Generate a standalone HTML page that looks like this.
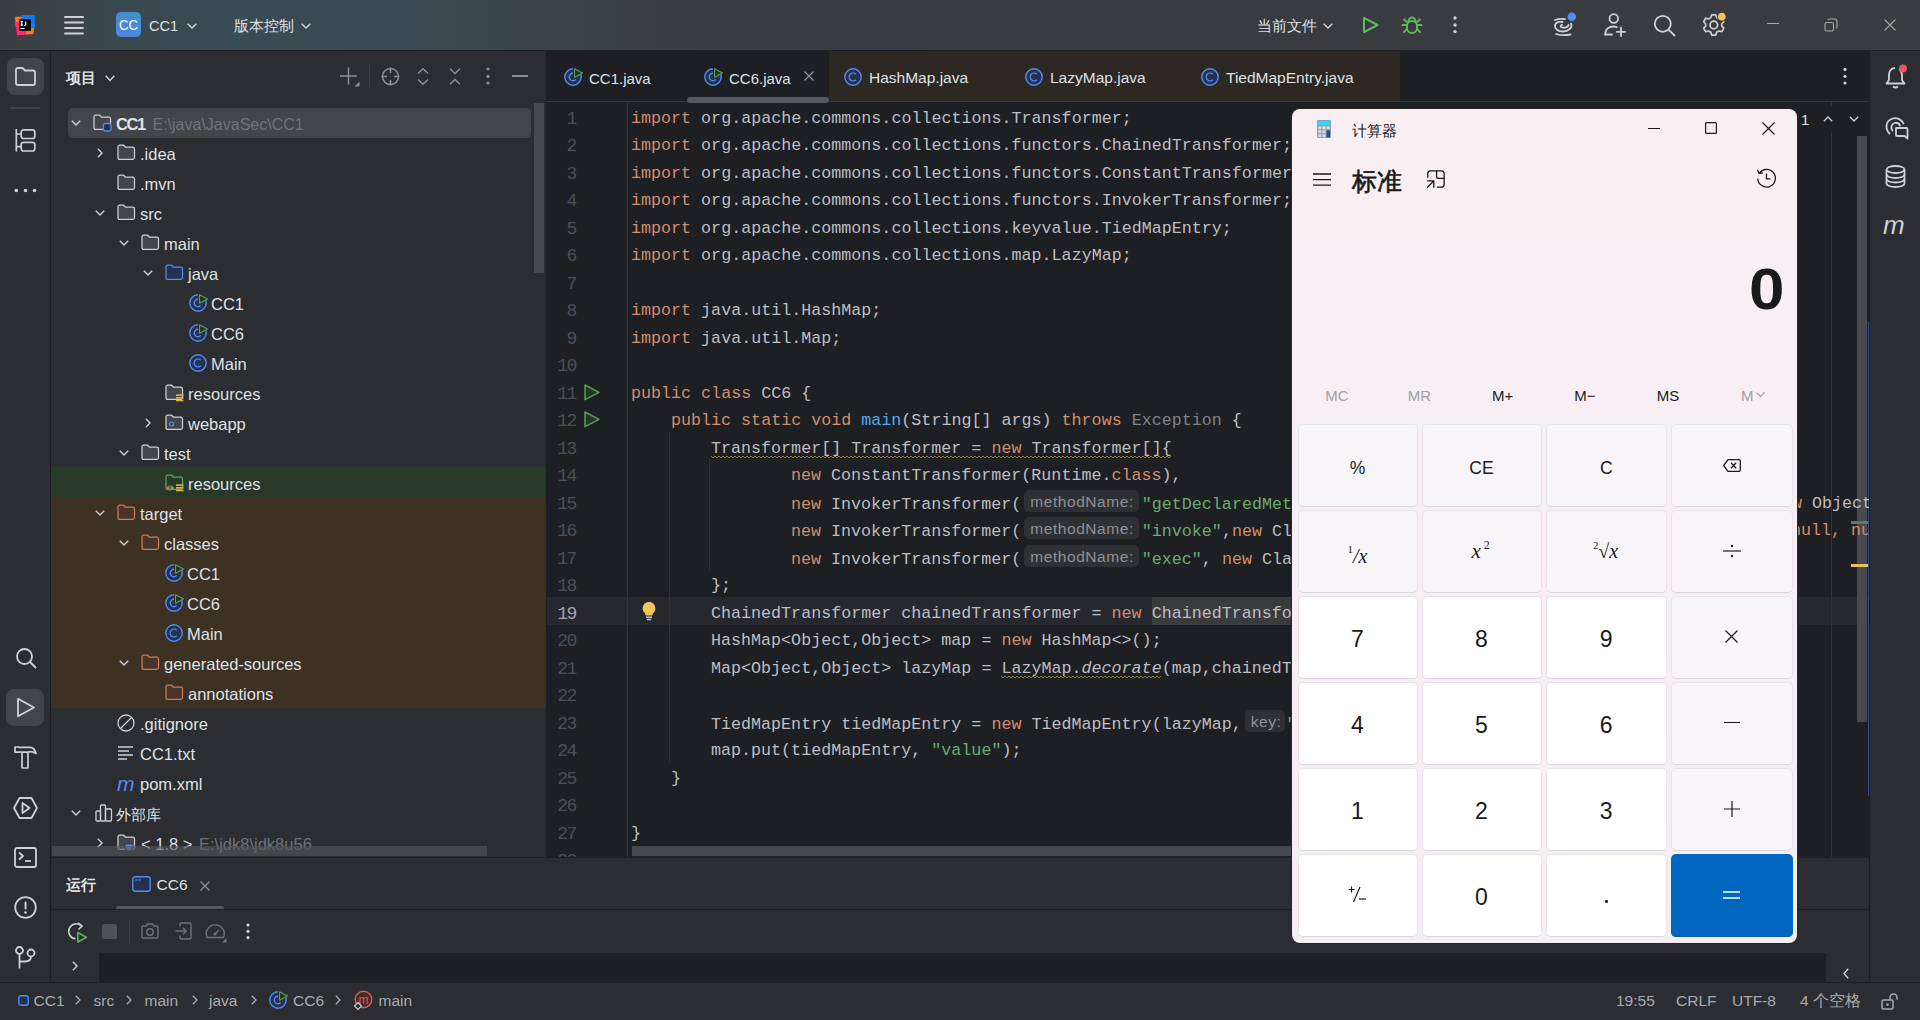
<!DOCTYPE html>
<html><head><meta charset="utf-8">
<style>
*{margin:0;padding:0;box-sizing:border-box}
html,body{width:1920px;height:1020px;overflow:hidden;background:#2B2D30;font-family:"Liberation Sans",sans-serif;color:#DFE1E5}
.a{position:absolute}
.t{position:absolute;white-space:pre}
svg{position:absolute;overflow:visible}
.code{position:absolute;white-space:pre;font-family:"Liberation Mono",monospace;font-size:16.71px;line-height:16.6px;color:#BCBEC4}
.k{color:#CF8E6D}.s{color:#6AAB73}.f{color:#56A8F5}.g{color:#7E8289}
.h{font-family:"Liberation Sans",sans-serif;font-size:15.5px;letter-spacing:0.55px;color:#8E9196;background:#2E3034;border-radius:5px;padding:2.5px 5px 2.2px 6px;margin:0 3px 0 3px;position:relative;top:-2.2px}
</style></head><body>

<div class="a" style="left:0px;top:0px;width:1920px;height:50px;background:linear-gradient(90deg,#3b3e41 0px,#3a464d 90px,#394b54 230px,#3a4951 420px,#393e42 720px,#393b3f 1000px,#393b3f 1920px);"></div>
<div class="a" style="left:0px;top:50px;width:1920px;height:1px;background:#1E1F22;"></div>
<div class="a" style="left:0px;top:51px;width:50px;height:932px;background:#2B2D30;"></div>
<div class="a" style="left:50px;top:51px;width:1px;height:932px;background:#1E1F22;"></div>
<div class="a" style="left:51px;top:51px;width:495px;height:806px;background:#2B2D30;"></div>
<div class="a" style="left:546px;top:51px;width:1323px;height:806px;background:#1E1F22;"></div>
<div class="a" style="left:1869px;top:51px;width:1px;height:932px;background:#1E1F22;"></div>
<div class="a" style="left:1870px;top:51px;width:50px;height:932px;background:#2B2D30;"></div>
<div class="a" style="left:51px;top:857px;width:1818px;height:1px;background:#1E1F22;"></div>
<div class="a" style="left:51px;top:858px;width:1818px;height:124px;background:#2B2D30;"></div>
<div class="a" style="left:0px;top:982px;width:1920px;height:1px;background:#1E1F22;"></div>
<div class="a" style="left:0px;top:983px;width:1920px;height:37px;background:#2B2D30;"></div>
<svg style="left:15px;top:15px" width="20" height="20" viewBox="0 0 20 20">
<rect x="6.3" y="0" width="13.5" height="13" rx="0.8" fill="#087CFA"/>
<path d="M0 1.8 H6.5 V12 H0.6 Z" fill="#FE7B17"/>
<path d="M0.6 7 H7 L13.5 19.5 L2 20.3 Z" fill="#FF2D6A"/>
<path d="M11 13 H19 L18.5 19 L11.5 19.5 Z" fill="#FE7B17"/>
<rect x="4.2" y="4.2" width="11.8" height="11.7" fill="#000"/>
<path d="M5.5 6.5 H8 M6.75 6.5 V10.2 M5.5 10.2 H8 M10.7 6.5 V9.5 Q10.7 10.5 9.3 10.3" fill="none" stroke="#fff" stroke-width="1.2"/>
<rect x="5.3" y="13" width="4.4" height="1" fill="#fff"/>
</svg>
<svg style="left:64px;top:16px" width="20" height="18" viewBox="0 0 20 18"><rect x="0" y="0" width="20" height="2" rx="1" fill="#CED0D6"/><rect x="0" y="5.5" width="20" height="2" rx="1" fill="#CED0D6"/><rect x="0" y="11" width="20" height="2" rx="1" fill="#CED0D6"/><rect x="0" y="16.5" width="20" height="2" rx="1" fill="#CED0D6"/></svg>
<svg style="left:116px;top:12px" width="25" height="25" viewBox="0 0 25 25">
<defs><linearGradient id="ccg" x1="0" y1="1" x2="1" y2="0"><stop offset="0" stop-color="#5A82E6"/><stop offset="1" stop-color="#3B93C8"/></linearGradient></defs>
<rect width="25" height="25" rx="5" fill="url(#ccg)"/>
<text x="12.5" y="18" text-anchor="middle" font-family="Liberation Sans" font-size="14" fill="#fff" textLength="19" lengthAdjust="spacingAndGlyphs">CC</text>
</svg>
<div class="t " style="left:149px;top:19.03px;font-size:14.5px;line-height:14.5px;color:#DFE1E5;font-weight:normal;font-family:'Liberation Sans',sans-serif;">CC1</div>
<svg style="left:186.5px;top:22.5px" width="10" height="5.5" viewBox="0 0 10 5.5"><path d="M0.7 0.7 L5.0 5.0 L9.3 0.7" fill="none" stroke="#CED0D6" stroke-width="1.5"/></svg>
<div class="t " style="left:234px;top:17.80px;font-size:15px;line-height:15px;color:#DFE1E5;font-weight:normal;font-family:'Liberation Sans',sans-serif;">版本控制</div>
<svg style="left:301px;top:22.5px" width="10" height="5.5" viewBox="0 0 10 5.5"><path d="M0.7 0.7 L5.0 5.0 L9.3 0.7" fill="none" stroke="#CED0D6" stroke-width="1.5"/></svg>
<div class="t " style="left:1257px;top:17.80px;font-size:15px;line-height:15px;color:#DFE1E5;font-weight:normal;font-family:'Liberation Sans',sans-serif;">当前文件</div>
<svg style="left:1323px;top:23px" width="10" height="5.5" viewBox="0 0 10 5.5"><path d="M0.7 0.7 L5.0 5.0 L9.3 0.7" fill="none" stroke="#CED0D6" stroke-width="1.5"/></svg>
<svg style="left:1362px;top:16px" width="17" height="18" viewBox="0 0 17 18"><path d="M2 1.8 L15.5 9 L2 16.2 Z" fill="none" stroke="#5FB865" stroke-width="2" stroke-linejoin="round"/></svg>
<svg style="left:1401px;top:15px" width="22" height="20" viewBox="0 0 22 20"><g fill="none" stroke="#5FB865" stroke-width="1.8" stroke-linecap="round">
<path d="M7.5 6 A3.5 3.5 0 0 1 14.5 6"/>
<rect x="6" y="6" width="10" height="12" rx="5"/>
<path d="M6 10 H1.5 M16 10 H20.5 M6 7 L3 4.5 M16 7 L19 4.5 M6 14 L3 17 M16 14 L19 17"/>
</g></svg>
<svg style="left:1453px;top:16px" width="4" height="18" viewBox="0 0 4 18"><circle cx="2" cy="2" r="1.7" fill="#CED0D6"/><circle cx="2" cy="9" r="1.7" fill="#CED0D6"/><circle cx="2" cy="15.6" r="1.7" fill="#CED0D6"/></svg>
<svg style="left:1553px;top:14px" width="24" height="22" viewBox="0 0 24 22"><g fill="none" stroke="#CED0D6" stroke-width="1.8" stroke-linecap="round">
<path d="M2 6 C6 4.5 9 4.5 12 5.2"/>
<path d="M18 9.5 C20 14 15 17.5 10 17.5 C5 17.5 1.5 15 2 11.5 C2.5 8.5 6 7.5 9.5 8"/>
<path d="M15.5 11 C15 13.5 11.5 14.2 9 13.5 C7 13 7 11 9 10.8"/>
<path d="M3 20 C8 21.5 13 21.5 17.5 20.5"/>
</g><circle cx="18.8" cy="2.7" r="4.3" fill="#548AF7"/></svg>
<svg style="left:1603px;top:13px" width="25" height="24" viewBox="0 0 25 24"><g fill="none" stroke="#CED0D6" stroke-width="1.8" stroke-linecap="round">
<circle cx="10.8" cy="5.5" r="4.3"/>
<path d="M2.2 21.5 C2.2 16 6 13.5 10.5 13.5 C12 13.5 13 13.7 14 14.2"/>
<path d="M2.2 21.5 H9"/>
<path d="M18 14.5 V23 M13.8 18.8 H22.2"/>
</g></svg>
<svg style="left:1653px;top:14px" width="23" height="23" viewBox="0 0 23 23"><g fill="none" stroke="#CED0D6" stroke-width="1.8" stroke-linecap="round"><circle cx="9.8" cy="9.8" r="8"/><path d="M15.8 15.8 L21.5 21.5"/></g></svg>
<svg style="left:1702px;top:13px" width="24" height="24" viewBox="0 0 24 24"><g fill="none" stroke="#CED0D6" stroke-width="1.8" stroke-linejoin="round">
<path d="M9.5 2 L14 2 L14.8 5 L17.5 6.5 L20.5 5.6 L22.7 9.5 L20.5 11.7 L20.5 14.3 L22.7 16.5 L20.5 20.4 L17.5 19.5 L14.8 21 L14 24 L9.5 24 L8.7 21 L6 19.5 L3 20.4 L0.8 16.5 L3 14.3 L3 11.7 L0.8 9.5 L3 5.6 L6 6.5 L8.7 5 Z" transform="scale(0.92) translate(1,0)"/>
<circle cx="11.8" cy="12" r="3.8"/>
</g><circle cx="19.8" cy="3.7" r="4.4" fill="#F2C55C" stroke="#393b3f" stroke-width="1"/></svg>
<div class="a" style="left:1767px;top:23px;width:12px;height:1.2px;background:#A8A8A8;"></div>
<svg style="left:1824px;top:18px" width="14" height="14" viewBox="0 0 14 14"><g fill="none" stroke="#A8A8A8" stroke-width="1.1"><rect x="1" y="4.5" width="8.5" height="8.5" rx="1.8"/><path d="M4 2 L4 2 Q4 1 5.5 1 L10.5 1 Q13 1 13 3.5 L13 9 Q13 10 12 10.2"/></g></svg>
<svg style="left:1884px;top:19px" width="12" height="12" viewBox="0 0 12 12"><path d="M0.5 0.5 L11.5 11.5 M11.5 0.5 L0.5 11.5" stroke="#A8A8A8" stroke-width="1.1"/></svg>
<div class="a" style="left:7px;top:58px;width:37px;height:37px;background:#43454A;border-radius:8px"></div>
<svg style="left:15px;top:67px" width="21" height="19" viewBox="0 0 21 19"><path d="M1 3 Q1 1 3 1 H7.5 L10 3.5 H18 Q20 3.5 20 5.5 V16 Q20 18 18 18 H3 Q1 18 1 16 Z" fill="none" stroke="#CED0D6" stroke-width="1.8" stroke-linejoin="round"/></svg>
<div class="a" style="left:10px;top:107px;width:30px;height:2px;background:#43454A;border-radius:1px"></div>
<svg style="left:15px;top:129px" width="21" height="23" viewBox="0 0 21 23"><g fill="none" stroke="#CED0D6" stroke-width="1.7"><path d="M1.3 0 V22.5"/><rect x="6.2" y="0.9" width="13.6" height="8.6" rx="2.3"/><rect x="6.2" y="13.4" width="13.6" height="8.6" rx="2.3"/><path d="M1.3 5 H6.2 M1.3 17.6 H6.2"/></g></svg>
<svg style="left:14px;top:188px" width="24" height="5" viewBox="0 0 24 5"><circle cx="2.3" cy="2.5" r="1.8" fill="#CED0D6"/><circle cx="11.5" cy="2.5" r="1.8" fill="#CED0D6"/><circle cx="20.5" cy="2.5" r="1.8" fill="#CED0D6"/></svg>
<svg style="left:15px;top:647px" width="22" height="22" viewBox="0 0 22 22"><g fill="none" stroke="#CED0D6" stroke-width="1.8" stroke-linecap="round"><circle cx="9.5" cy="9.5" r="7.5"/><path d="M15 15 L20.5 20.5"/></g></svg>
<div class="a" style="left:6px;top:689px;width:38px;height:37px;background:#43454A;border-radius:8px"></div>
<svg style="left:16px;top:697px" width="20" height="21" viewBox="0 0 20 21"><path d="M2 1.8 L18 10.5 L2 19.2 Z" fill="none" stroke="#CED0D6" stroke-width="1.8" stroke-linejoin="round"/></svg>
<svg style="left:14px;top:746px" width="24" height="24" viewBox="0 0 24 24"><g fill="none" stroke="#CED0D6" stroke-width="1.7" stroke-linejoin="round"><path d="M1 1 H4.5 Q6 1.8 7.5 1.3 H16 Q20.5 1.3 22 7.5 Q19 5.3 15 5.8 L14 6.2 H7.5 Q6 5.6 4.5 6.2 H1 Z"/><path d="M8 6.2 V21.5 Q8 22 8.5 22 H13.5 Q14 22 14 21.5 V6.2"/></g></svg>
<svg style="left:13px;top:797px" width="25" height="22" viewBox="0 0 25 22"><g fill="none" stroke="#CED0D6" stroke-width="1.8" stroke-linejoin="round"><path d="M6.5 1 H18.5 L24 11 L18.5 21 H6.5 L1 11 Z"/><path d="M9.5 6 L16.5 11 L9.5 16 Z"/></g></svg>
<svg style="left:14px;top:847px" width="23" height="21" viewBox="0 0 23 21"><g fill="none" stroke="#CED0D6" stroke-width="1.8" stroke-linejoin="round"><rect x="1" y="1" width="21" height="19" rx="2"/><path d="M5 5.5 L9 9 L5 12.5"/><path d="M11 14 H17"/></g></svg>
<svg style="left:14px;top:896px" width="23" height="23" viewBox="0 0 23 23"><g fill="none" stroke="#CED0D6" stroke-width="1.8"><circle cx="11.5" cy="11.5" r="10.3"/></g><rect x="10.6" y="5.5" width="1.9" height="8" rx="0.9" fill="#CED0D6"/><circle cx="11.5" cy="16.5" r="1.3" fill="#CED0D6"/></svg>
<svg style="left:15px;top:946px" width="21" height="23" viewBox="0 0 21 23"><g fill="none" stroke="#CED0D6" stroke-width="1.8"><circle cx="4.5" cy="4.5" r="3.5"/><circle cx="16" cy="7" r="3.5"/><path d="M4.5 8 V22.5"/><path d="M16 10.5 Q16 15.5 10 15.5 H4.5"/></g></svg>
<div class="t " style="left:66px;top:69.80px;font-size:15px;line-height:15px;color:#DFE1E5;font-weight:bold;font-family:'Liberation Sans',sans-serif;">项目</div>
<svg style="left:105px;top:74.5px" width="10" height="6" viewBox="0 0 10 6"><path d="M0.7 0.7 L5.0 5.5 L9.3 0.7" fill="none" stroke="#CED0D6" stroke-width="1.5"/></svg>
<svg style="left:340px;top:67px" width="20" height="20" viewBox="0 0 20 20"><g stroke="#8C8F94" stroke-width="1.5"><path d="M8.5 0.5 V17.5 M0 9 H17"/></g><path d="M19.5 14.5 V19.5 H14.5 Z" fill="#8C8F94"/></svg>
<div class="a" style="left:369px;top:64px;width:1px;height:24px;background:#393B40;"></div>
<svg style="left:381px;top:67px" width="19" height="19" viewBox="0 0 19 19"><g fill="none" stroke="#8C8F94" stroke-width="1.5"><circle cx="9.5" cy="9.5" r="8"/><path d="M9.5 0.5 V6 M9.5 13 V18.5 M0.5 9.5 H6 M13 9.5 H18.5"/></g></svg>
<svg style="left:417px;top:68px" width="12" height="17" viewBox="0 0 12 17"><g fill="none" stroke="#8C8F94" stroke-width="1.5"><path d="M1 5.5 L6 0.8 L11 5.5"/><path d="M1 11.5 L6 16.2 L11 11.5"/></g></svg>
<svg style="left:449px;top:68px" width="12" height="17" viewBox="0 0 12 17"><g fill="none" stroke="#8C8F94" stroke-width="1.5"><path d="M1 0.8 L6 5.5 L11 0.8"/><path d="M1 16.2 L6 11.5 L11 16.2"/></g></svg>
<svg style="left:486px;top:67px" width="4" height="18" viewBox="0 0 4 18"><circle cx="2" cy="2" r="1.6" fill="#8C8F94"/><circle cx="2" cy="9.3" r="1.6" fill="#8C8F94"/><circle cx="2" cy="16" r="1.6" fill="#8C8F94"/></svg>
<div class="a" style="left:512px;top:75px;width:16px;height:1.6px;background:#8C8F94;"></div>
<div class="a" style="left:68px;top:108px;width:463px;height:30px;background:#43454A;border-radius:5px"></div>
<div class="a" style="left:51px;top:467px;width:495px;height:30px;background:#283829;"></div>
<div class="a" style="left:51px;top:497px;width:495px;height:211px;background:#3D3124;"></div>
<svg style="left:71px;top:120px" width="10" height="6" viewBox="0 0 10 6"><path d="M0.8 0.8 L5 5 L9.2 0.8" fill="none" stroke="#CED0D6" stroke-width="1.4"/></svg>
<svg style="left:93px;top:114px" width="19" height="17" viewBox="0 0 19 17"><path d="M1 3 Q1 1.2 2.8 1.2 H6.6 L8.6 3.2 H15.7 Q17.5 3.2 17.5 5 V13.6 Q17.5 15.4 15.7 15.4 H2.8 Q1 15.4 1 13.6 Z" fill="#43454A" stroke="#CED0D6" stroke-width="1.25" stroke-linejoin="round"/><rect x="10.5" y="9.5" width="7.5" height="7.5" rx="1.8" fill="#25324D" stroke="#548AF7" stroke-width="1.3"/></svg>
<div class="t " style="left:116px;top:116.33px;font-size:16.5px;line-height:16.5px;color:#DFE1E5;font-weight:bold;font-family:'Liberation Sans',sans-serif;letter-spacing:-1.4px">CC1</div>
<div class="t " style="left:152.5px;top:116.76px;font-size:16px;line-height:16px;color:#6F737A;font-weight:normal;font-family:'Liberation Sans',sans-serif;">E:\java\JavaSec\CC1</div>
<svg style="left:97px;top:148px" width="6" height="10" viewBox="0 0 6 10"><path d="M0.8 0.8 L5 5 L0.8 9.2" fill="none" stroke="#CED0D6" stroke-width="1.4"/></svg>
<svg style="left:117px;top:144px" width="19" height="17" viewBox="0 0 19 17"><path d="M1 3 Q1 1.2 2.8 1.2 H6.6 L8.6 3.2 H15.7 Q17.5 3.2 17.5 5 V13.6 Q17.5 15.4 15.7 15.4 H2.8 Q1 15.4 1 13.6 Z" fill="#43454A" stroke="#CED0D6" stroke-width="1.25" stroke-linejoin="round"/></svg>
<div class="t " style="left:140px;top:146.33px;font-size:16.5px;line-height:16.5px;color:#DFE1E5;font-weight:normal;font-family:'Liberation Sans',sans-serif;">.idea</div>
<svg style="left:117px;top:174px" width="19" height="17" viewBox="0 0 19 17"><path d="M1 3 Q1 1.2 2.8 1.2 H6.6 L8.6 3.2 H15.7 Q17.5 3.2 17.5 5 V13.6 Q17.5 15.4 15.7 15.4 H2.8 Q1 15.4 1 13.6 Z" fill="#43454A" stroke="#CED0D6" stroke-width="1.25" stroke-linejoin="round"/></svg>
<div class="t " style="left:140px;top:176.33px;font-size:16.5px;line-height:16.5px;color:#DFE1E5;font-weight:normal;font-family:'Liberation Sans',sans-serif;">.mvn</div>
<svg style="left:95px;top:210px" width="10" height="6" viewBox="0 0 10 6"><path d="M0.8 0.8 L5 5 L9.2 0.8" fill="none" stroke="#CED0D6" stroke-width="1.4"/></svg>
<svg style="left:117px;top:204px" width="19" height="17" viewBox="0 0 19 17"><path d="M1 3 Q1 1.2 2.8 1.2 H6.6 L8.6 3.2 H15.7 Q17.5 3.2 17.5 5 V13.6 Q17.5 15.4 15.7 15.4 H2.8 Q1 15.4 1 13.6 Z" fill="#43454A" stroke="#CED0D6" stroke-width="1.25" stroke-linejoin="round"/></svg>
<div class="t " style="left:140px;top:206.33px;font-size:16.5px;line-height:16.5px;color:#DFE1E5;font-weight:normal;font-family:'Liberation Sans',sans-serif;">src</div>
<svg style="left:119px;top:240px" width="10" height="6" viewBox="0 0 10 6"><path d="M0.8 0.8 L5 5 L9.2 0.8" fill="none" stroke="#CED0D6" stroke-width="1.4"/></svg>
<svg style="left:141px;top:234px" width="19" height="17" viewBox="0 0 19 17"><path d="M1 3 Q1 1.2 2.8 1.2 H6.6 L8.6 3.2 H15.7 Q17.5 3.2 17.5 5 V13.6 Q17.5 15.4 15.7 15.4 H2.8 Q1 15.4 1 13.6 Z" fill="#43454A" stroke="#CED0D6" stroke-width="1.25" stroke-linejoin="round"/></svg>
<div class="t " style="left:164px;top:236.33px;font-size:16.5px;line-height:16.5px;color:#DFE1E5;font-weight:normal;font-family:'Liberation Sans',sans-serif;">main</div>
<svg style="left:143px;top:270px" width="10" height="6" viewBox="0 0 10 6"><path d="M0.8 0.8 L5 5 L9.2 0.8" fill="none" stroke="#CED0D6" stroke-width="1.4"/></svg>
<svg style="left:165px;top:264px" width="19" height="17" viewBox="0 0 19 17"><path d="M1 3 Q1 1.2 2.8 1.2 H6.6 L8.6 3.2 H15.7 Q17.5 3.2 17.5 5 V13.6 Q17.5 15.4 15.7 15.4 H2.8 Q1 15.4 1 13.6 Z" fill="#25324D" stroke="#548AF7" stroke-width="1.25" stroke-linejoin="round"/></svg>
<div class="t " style="left:188px;top:266.33px;font-size:16.5px;line-height:16.5px;color:#DFE1E5;font-weight:normal;font-family:'Liberation Sans',sans-serif;">java</div>
<svg style="left:189px;top:294px" width="18" height="18" viewBox="0 0 18 18"><defs><mask id="m189303"><rect x="-2" y="-2" width="24" height="24" fill="#fff"/><path d="M9 -1.5 L20 4.5 L9 10.5 Z" fill="#000"/></mask></defs>
<g mask="url(#m189303)"><circle cx="9" cy="9" r="8.2" fill="#25324D" stroke="#548AF7" stroke-width="1.4"/><path d="M11.6 6.4 A3.7 3.7 0 1 0 11.6 11.6" fill="none" stroke="#548AF7" stroke-width="1.4"/></g>
<path d="M10.5 0.8 L18.5 5 L10.5 9.2 Z" fill="#223424" stroke="#5A9E5C" stroke-width="1.1" stroke-linejoin="round"/></svg>
<div class="t " style="left:211px;top:296.33px;font-size:16.5px;line-height:16.5px;color:#DFE1E5;font-weight:normal;font-family:'Liberation Sans',sans-serif;">CC1</div>
<svg style="left:189px;top:324px" width="18" height="18" viewBox="0 0 18 18"><defs><mask id="m189333"><rect x="-2" y="-2" width="24" height="24" fill="#fff"/><path d="M9 -1.5 L20 4.5 L9 10.5 Z" fill="#000"/></mask></defs>
<g mask="url(#m189333)"><circle cx="9" cy="9" r="8.2" fill="#25324D" stroke="#548AF7" stroke-width="1.4"/><path d="M11.6 6.4 A3.7 3.7 0 1 0 11.6 11.6" fill="none" stroke="#548AF7" stroke-width="1.4"/></g>
<path d="M10.5 0.8 L18.5 5 L10.5 9.2 Z" fill="#223424" stroke="#5A9E5C" stroke-width="1.1" stroke-linejoin="round"/></svg>
<div class="t " style="left:211px;top:326.33px;font-size:16.5px;line-height:16.5px;color:#DFE1E5;font-weight:normal;font-family:'Liberation Sans',sans-serif;">CC6</div>
<svg style="left:189px;top:354px" width="18" height="18" viewBox="0 0 18 18"><circle cx="9" cy="9" r="8.2" fill="#25324D" stroke="#548AF7" stroke-width="1.4"/><path d="M11.8 6.2 A3.9 3.9 0 1 0 11.8 11.8" fill="none" stroke="#548AF7" stroke-width="1.4"/></svg>
<div class="t " style="left:211px;top:356.33px;font-size:16.5px;line-height:16.5px;color:#DFE1E5;font-weight:normal;font-family:'Liberation Sans',sans-serif;">Main</div>
<svg style="left:165px;top:384px" width="19" height="17" viewBox="0 0 19 17"><path d="M1 3 Q1 1.2 2.8 1.2 H6.6 L8.6 3.2 H15.7 Q17.5 3.2 17.5 5 V13.6 Q17.5 15.4 15.7 15.4 H2.8 Q1 15.4 1 13.6 Z" fill="#43454A" stroke="#CED0D6" stroke-width="1.25" stroke-linejoin="round"/><g fill="#E3B341"><rect x="11" y="10.3" width="7.5" height="1.6"/><rect x="11" y="13" width="7.5" height="1.6"/><rect x="11" y="15.7" width="7.5" height="1.6"/></g></svg>
<div class="t " style="left:188px;top:386.33px;font-size:16.5px;line-height:16.5px;color:#DFE1E5;font-weight:normal;font-family:'Liberation Sans',sans-serif;">resources</div>
<svg style="left:145px;top:418px" width="6" height="10" viewBox="0 0 6 10"><path d="M0.8 0.8 L5 5 L0.8 9.2" fill="none" stroke="#CED0D6" stroke-width="1.4"/></svg>
<svg style="left:165px;top:414px" width="19" height="17" viewBox="0 0 19 17"><path d="M1 3 Q1 1.2 2.8 1.2 H6.6 L8.6 3.2 H15.7 Q17.5 3.2 17.5 5 V13.6 Q17.5 15.4 15.7 15.4 H2.8 Q1 15.4 1 13.6 Z" fill="#43454A" stroke="#CED0D6" stroke-width="1.25" stroke-linejoin="round"/><circle cx="6.5" cy="10" r="2" fill="none" stroke="#548AF7" stroke-width="1.2"/></svg>
<div class="t " style="left:188px;top:416.33px;font-size:16.5px;line-height:16.5px;color:#DFE1E5;font-weight:normal;font-family:'Liberation Sans',sans-serif;">webapp</div>
<svg style="left:119px;top:450px" width="10" height="6" viewBox="0 0 10 6"><path d="M0.8 0.8 L5 5 L9.2 0.8" fill="none" stroke="#CED0D6" stroke-width="1.4"/></svg>
<svg style="left:141px;top:444px" width="19" height="17" viewBox="0 0 19 17"><path d="M1 3 Q1 1.2 2.8 1.2 H6.6 L8.6 3.2 H15.7 Q17.5 3.2 17.5 5 V13.6 Q17.5 15.4 15.7 15.4 H2.8 Q1 15.4 1 13.6 Z" fill="#43454A" stroke="#CED0D6" stroke-width="1.25" stroke-linejoin="round"/></svg>
<div class="t " style="left:164px;top:446.33px;font-size:16.5px;line-height:16.5px;color:#DFE1E5;font-weight:normal;font-family:'Liberation Sans',sans-serif;">test</div>
<svg style="left:165px;top:474px" width="19" height="17" viewBox="0 0 19 17"><path d="M1 3 Q1 1.2 2.8 1.2 H6.6 L8.6 3.2 H15.7 Q17.5 3.2 17.5 5 V13.6 Q17.5 15.4 15.7 15.4 H2.8 Q1 15.4 1 13.6 Z" fill="#283829" stroke="#5FA65F" stroke-width="1.25" stroke-linejoin="round"/><g fill="#E3B341"><rect x="11" y="10.3" width="7.5" height="1.6"/><rect x="11" y="13" width="7.5" height="1.6"/><rect x="11" y="15.7" width="7.5" height="1.6"/></g><path d="M4.5 11 L0.5 14 L4.5 17 Z" fill="#DB5C5C"/><path d="M5.5 11 L9.5 14 L5.5 17 Z" fill="#5FA65F"/></svg>
<div class="t " style="left:188px;top:476.33px;font-size:16.5px;line-height:16.5px;color:#DFE1E5;font-weight:normal;font-family:'Liberation Sans',sans-serif;">resources</div>
<svg style="left:95px;top:510px" width="10" height="6" viewBox="0 0 10 6"><path d="M0.8 0.8 L5 5 L9.2 0.8" fill="none" stroke="#CED0D6" stroke-width="1.4"/></svg>
<svg style="left:117px;top:504px" width="19" height="17" viewBox="0 0 19 17"><path d="M1 3 Q1 1.2 2.8 1.2 H6.6 L8.6 3.2 H15.7 Q17.5 3.2 17.5 5 V13.6 Q17.5 15.4 15.7 15.4 H2.8 Q1 15.4 1 13.6 Z" fill="#47342A" stroke="#C97C57" stroke-width="1.25" stroke-linejoin="round"/></svg>
<div class="t " style="left:140px;top:506.33px;font-size:16.5px;line-height:16.5px;color:#DFE1E5;font-weight:normal;font-family:'Liberation Sans',sans-serif;">target</div>
<svg style="left:119px;top:540px" width="10" height="6" viewBox="0 0 10 6"><path d="M0.8 0.8 L5 5 L9.2 0.8" fill="none" stroke="#CED0D6" stroke-width="1.4"/></svg>
<svg style="left:141px;top:534px" width="19" height="17" viewBox="0 0 19 17"><path d="M1 3 Q1 1.2 2.8 1.2 H6.6 L8.6 3.2 H15.7 Q17.5 3.2 17.5 5 V13.6 Q17.5 15.4 15.7 15.4 H2.8 Q1 15.4 1 13.6 Z" fill="#47342A" stroke="#C97C57" stroke-width="1.25" stroke-linejoin="round"/></svg>
<div class="t " style="left:164px;top:536.33px;font-size:16.5px;line-height:16.5px;color:#DFE1E5;font-weight:normal;font-family:'Liberation Sans',sans-serif;">classes</div>
<svg style="left:165px;top:564px" width="18" height="18" viewBox="0 0 18 18"><defs><mask id="m165573"><rect x="-2" y="-2" width="24" height="24" fill="#fff"/><path d="M9 -1.5 L20 4.5 L9 10.5 Z" fill="#000"/></mask></defs>
<g mask="url(#m165573)"><circle cx="9" cy="9" r="8.2" fill="#25324D" stroke="#548AF7" stroke-width="1.4"/><path d="M11.6 6.4 A3.7 3.7 0 1 0 11.6 11.6" fill="none" stroke="#548AF7" stroke-width="1.4"/></g>
<path d="M10.5 0.8 L18.5 5 L10.5 9.2 Z" fill="#223424" stroke="#5A9E5C" stroke-width="1.1" stroke-linejoin="round"/></svg>
<div class="t " style="left:187px;top:566.33px;font-size:16.5px;line-height:16.5px;color:#DFE1E5;font-weight:normal;font-family:'Liberation Sans',sans-serif;">CC1</div>
<svg style="left:165px;top:594px" width="18" height="18" viewBox="0 0 18 18"><defs><mask id="m165603"><rect x="-2" y="-2" width="24" height="24" fill="#fff"/><path d="M9 -1.5 L20 4.5 L9 10.5 Z" fill="#000"/></mask></defs>
<g mask="url(#m165603)"><circle cx="9" cy="9" r="8.2" fill="#25324D" stroke="#548AF7" stroke-width="1.4"/><path d="M11.6 6.4 A3.7 3.7 0 1 0 11.6 11.6" fill="none" stroke="#548AF7" stroke-width="1.4"/></g>
<path d="M10.5 0.8 L18.5 5 L10.5 9.2 Z" fill="#223424" stroke="#5A9E5C" stroke-width="1.1" stroke-linejoin="round"/></svg>
<div class="t " style="left:187px;top:596.33px;font-size:16.5px;line-height:16.5px;color:#DFE1E5;font-weight:normal;font-family:'Liberation Sans',sans-serif;">CC6</div>
<svg style="left:165px;top:624px" width="18" height="18" viewBox="0 0 18 18"><circle cx="9" cy="9" r="8.2" fill="#25324D" stroke="#548AF7" stroke-width="1.4"/><path d="M11.8 6.2 A3.9 3.9 0 1 0 11.8 11.8" fill="none" stroke="#548AF7" stroke-width="1.4"/></svg>
<div class="t " style="left:187px;top:626.33px;font-size:16.5px;line-height:16.5px;color:#DFE1E5;font-weight:normal;font-family:'Liberation Sans',sans-serif;">Main</div>
<svg style="left:119px;top:660px" width="10" height="6" viewBox="0 0 10 6"><path d="M0.8 0.8 L5 5 L9.2 0.8" fill="none" stroke="#CED0D6" stroke-width="1.4"/></svg>
<svg style="left:141px;top:654px" width="19" height="17" viewBox="0 0 19 17"><path d="M1 3 Q1 1.2 2.8 1.2 H6.6 L8.6 3.2 H15.7 Q17.5 3.2 17.5 5 V13.6 Q17.5 15.4 15.7 15.4 H2.8 Q1 15.4 1 13.6 Z" fill="#47342A" stroke="#C97C57" stroke-width="1.25" stroke-linejoin="round"/></svg>
<div class="t " style="left:164px;top:656.33px;font-size:16.5px;line-height:16.5px;color:#DFE1E5;font-weight:normal;font-family:'Liberation Sans',sans-serif;">generated-sources</div>
<svg style="left:165px;top:684px" width="19" height="17" viewBox="0 0 19 17"><path d="M1 3 Q1 1.2 2.8 1.2 H6.6 L8.6 3.2 H15.7 Q17.5 3.2 17.5 5 V13.6 Q17.5 15.4 15.7 15.4 H2.8 Q1 15.4 1 13.6 Z" fill="#47342A" stroke="#C97C57" stroke-width="1.25" stroke-linejoin="round"/></svg>
<div class="t " style="left:188px;top:686.33px;font-size:16.5px;line-height:16.5px;color:#DFE1E5;font-weight:normal;font-family:'Liberation Sans',sans-serif;">annotations</div>
<svg style="left:117px;top:714px" width="18" height="18" viewBox="0 0 18 18"><g fill="none" stroke="#CED0D6" stroke-width="1.3"><circle cx="9" cy="9" r="8"/><path d="M3.5 14.5 L14.5 3.5"/></g></svg>
<div class="t " style="left:140px;top:716.33px;font-size:16.5px;line-height:16.5px;color:#DFE1E5;font-weight:normal;font-family:'Liberation Sans',sans-serif;">.gitignore</div>
<svg style="left:118px;top:746px" width="16" height="14" viewBox="0 0 16 14"><g stroke="#CED0D6" stroke-width="1.3"><path d="M0 1 H15 M0 5 H11 M0 9 H15 M0 13 H9"/></g></svg>
<div class="t " style="left:140px;top:746.33px;font-size:16.5px;line-height:16.5px;color:#DFE1E5;font-weight:normal;font-family:'Liberation Sans',sans-serif;">CC1.txt</div>
<div class="t " style="left:117px;top:772.52px;font-size:21px;line-height:21px;color:#548AF7;font-weight:normal;font-family:'Liberation Sans',sans-serif;font-style:italic;letter-spacing:-1px">m</div>
<div class="t " style="left:140px;top:776.33px;font-size:16.5px;line-height:16.5px;color:#DFE1E5;font-weight:normal;font-family:'Liberation Sans',sans-serif;">pom.xml</div>
<svg style="left:71px;top:810px" width="10" height="6" viewBox="0 0 10 6"><path d="M0.8 0.8 L5 5 L9.2 0.8" fill="none" stroke="#CED0D6" stroke-width="1.4"/></svg>
<svg style="left:95px;top:804px" width="18" height="18" viewBox="0 0 18 18"><g fill="none" stroke="#CED0D6" stroke-width="1.3"><rect x="1" y="7" width="4.5" height="10" rx="1"/><rect x="5.5" y="1" width="5" height="16" rx="1"/><rect x="10.5" y="5" width="6" height="12" rx="1"/></g></svg>
<div class="t " style="left:116px;top:806.80px;font-size:15px;line-height:15px;color:#DFE1E5;font-weight:normal;font-family:'Liberation Sans',sans-serif;">外部库</div>
<svg style="left:97px;top:838px" width="6" height="10" viewBox="0 0 6 10"><path d="M0.8 0.8 L5 5 L0.8 9.2" fill="none" stroke="#CED0D6" stroke-width="1.4"/></svg>
<svg style="left:117px;top:834px" width="19" height="17" viewBox="0 0 19 17"><path d="M1 3 Q1 1.2 2.8 1.2 H6.6 L8.6 3.2 H15.7 Q17.5 3.2 17.5 5 V13.6 Q17.5 15.4 15.7 15.4 H2.8 Q1 15.4 1 13.6 Z" fill="#43454A" stroke="#CED0D6" stroke-width="1.25" stroke-linejoin="round"/><path d="M8 10 H16 V13 Q16 17 12 17 Q8 17 8 13 Z" fill="#548AF7" stroke="#2B2D30" stroke-width="0.8"/><path d="M16 11 Q18.5 11 18 13.5 Q17.5 15 16 14.5" fill="none" stroke="#548AF7" stroke-width="1"/></svg>
<div class="t " style="left:141px;top:836.33px;font-size:16.5px;line-height:16.5px;color:#DFE1E5;font-weight:normal;font-family:'Liberation Sans',sans-serif;">&lt; 1.8 &gt;</div>
<div class="t " style="left:199px;top:836.33px;font-size:16.5px;line-height:16.5px;color:#6F737A;font-weight:normal;font-family:'Liberation Sans',sans-serif;">E:\jdk8\jdk8u56</div>
<div class="a" style="left:534px;top:103px;width:10px;height:170px;background:#48494C;"></div>
<div class="a" style="left:52px;top:846px;width:435px;height:10px;background:rgba(85,86,90,0.6);"></div>
<div class="a" style="left:829px;top:51px;width:571px;height:50px;background:#2D2822;"></div>
<div class="a" style="left:546px;top:101px;width:1323px;height:1px;background:#36383C;"></div>
<div class="a" style="left:687px;top:97px;width:142px;height:6px;background:#55585E;border-radius:3px"></div>
<svg style="left:564px;top:67.5px" width="18" height="18" viewBox="0 0 18 18"><defs><mask id="m56476.5"><rect x="-2" y="-2" width="24" height="24" fill="#fff"/><path d="M9 -1.5 L20 4.5 L9 10.5 Z" fill="#000"/></mask></defs>
<g mask="url(#m56476.5)"><circle cx="9" cy="9" r="8.2" fill="#25324D" stroke="#548AF7" stroke-width="1.4"/><path d="M11.6 6.4 A3.7 3.7 0 1 0 11.6 11.6" fill="none" stroke="#548AF7" stroke-width="1.4"/></g>
<path d="M10.5 0.8 L18.5 5 L10.5 9.2 Z" fill="#223424" stroke="#5A9E5C" stroke-width="1.1" stroke-linejoin="round"/></svg>
<div class="t " style="left:589px;top:70.80px;font-size:15px;line-height:15px;color:#DFE1E5;font-weight:normal;font-family:'Liberation Sans',sans-serif;">CC1.java</div>
<svg style="left:704px;top:67.5px" width="18" height="18" viewBox="0 0 18 18"><defs><mask id="m70476.5"><rect x="-2" y="-2" width="24" height="24" fill="#fff"/><path d="M9 -1.5 L20 4.5 L9 10.5 Z" fill="#000"/></mask></defs>
<g mask="url(#m70476.5)"><circle cx="9" cy="9" r="8.2" fill="#25324D" stroke="#548AF7" stroke-width="1.4"/><path d="M11.6 6.4 A3.7 3.7 0 1 0 11.6 11.6" fill="none" stroke="#548AF7" stroke-width="1.4"/></g>
<path d="M10.5 0.8 L18.5 5 L10.5 9.2 Z" fill="#223424" stroke="#5A9E5C" stroke-width="1.1" stroke-linejoin="round"/></svg>
<div class="t " style="left:729px;top:70.80px;font-size:15px;line-height:15px;color:#DFE1E5;font-weight:normal;font-family:'Liberation Sans',sans-serif;">CC6.java</div>
<svg style="left:804px;top:71px" width="10" height="10" viewBox="0 0 10 10"><path d="M0.5 0.5 L9.5 9.5 M9.5 0.5 L0.5 9.5" stroke="#8C8F94" stroke-width="1.3"/></svg>
<svg style="left:844px;top:67.5px" width="18" height="18" viewBox="0 0 18 18"><circle cx="9" cy="9" r="8.2" fill="#25324D" stroke="#548AF7" stroke-width="1.4"/><path d="M11.8 6.2 A3.9 3.9 0 1 0 11.8 11.8" fill="none" stroke="#548AF7" stroke-width="1.4"/></svg>
<div class="t " style="left:869px;top:70.38px;font-size:15.5px;line-height:15.5px;color:#DFE1E5;font-weight:normal;font-family:'Liberation Sans',sans-serif;">HashMap.java</div>
<svg style="left:1025px;top:67.5px" width="18" height="18" viewBox="0 0 18 18"><circle cx="9" cy="9" r="8.2" fill="#25324D" stroke="#548AF7" stroke-width="1.4"/><path d="M11.8 6.2 A3.9 3.9 0 1 0 11.8 11.8" fill="none" stroke="#548AF7" stroke-width="1.4"/></svg>
<div class="t " style="left:1050px;top:70.38px;font-size:15.5px;line-height:15.5px;color:#DFE1E5;font-weight:normal;font-family:'Liberation Sans',sans-serif;">LazyMap.java</div>
<svg style="left:1201px;top:67.5px" width="18" height="18" viewBox="0 0 18 18"><circle cx="9" cy="9" r="8.2" fill="#25324D" stroke="#548AF7" stroke-width="1.4"/><path d="M11.8 6.2 A3.9 3.9 0 1 0 11.8 11.8" fill="none" stroke="#548AF7" stroke-width="1.4"/></svg>
<div class="t " style="left:1226px;top:70.38px;font-size:15.5px;line-height:15.5px;color:#DFE1E5;font-weight:normal;font-family:'Liberation Sans',sans-serif;">TiedMapEntry.java</div>
<svg style="left:1843px;top:67px" width="4" height="18" viewBox="0 0 4 18"><circle cx="2" cy="2.4" r="1.6" fill="#CED0D6"/><circle cx="2" cy="9.3" r="1.6" fill="#CED0D6"/><circle cx="2" cy="16" r="1.6" fill="#CED0D6"/></svg>
<div class="a" style="left:547px;top:597px;width:1321px;height:28px;background:#26282E;"></div>
<div class="a" style="left:627px;top:102px;width:1px;height:755px;background:#313438;"></div>
<div class="a" style="left:669px;top:432px;width:1px;height:330px;background:#2E3034;"></div>
<div class="a" style="left:709px;top:460px;width:1px;height:110px;background:#2E3034;"></div>
<div class="a" style="left:1831px;top:102px;width:1px;height:4px;background:#313438;"></div>
<div class="a" style="left:1831px;top:133px;width:1px;height:724px;background:#313438;"></div>
<div class="t" style="left:515px;width:61px;text-align:right;top:109.90px;font-family:'Liberation Mono',monospace;font-size:18px;line-height:18px;letter-spacing:-1.4px;color:#4B5059">1</div>
<div class="t" style="left:515px;width:61px;text-align:right;top:136.90px;font-family:'Liberation Mono',monospace;font-size:18px;line-height:18px;letter-spacing:-1.4px;color:#4B5059">2</div>
<div class="t" style="left:515px;width:61px;text-align:right;top:164.90px;font-family:'Liberation Mono',monospace;font-size:18px;line-height:18px;letter-spacing:-1.4px;color:#4B5059">3</div>
<div class="t" style="left:515px;width:61px;text-align:right;top:191.90px;font-family:'Liberation Mono',monospace;font-size:18px;line-height:18px;letter-spacing:-1.4px;color:#4B5059">4</div>
<div class="t" style="left:515px;width:61px;text-align:right;top:219.90px;font-family:'Liberation Mono',monospace;font-size:18px;line-height:18px;letter-spacing:-1.4px;color:#4B5059">5</div>
<div class="t" style="left:515px;width:61px;text-align:right;top:246.90px;font-family:'Liberation Mono',monospace;font-size:18px;line-height:18px;letter-spacing:-1.4px;color:#4B5059">6</div>
<div class="t" style="left:515px;width:61px;text-align:right;top:274.90px;font-family:'Liberation Mono',monospace;font-size:18px;line-height:18px;letter-spacing:-1.4px;color:#4B5059">7</div>
<div class="t" style="left:515px;width:61px;text-align:right;top:301.90px;font-family:'Liberation Mono',monospace;font-size:18px;line-height:18px;letter-spacing:-1.4px;color:#4B5059">8</div>
<div class="t" style="left:515px;width:61px;text-align:right;top:329.90px;font-family:'Liberation Mono',monospace;font-size:18px;line-height:18px;letter-spacing:-1.4px;color:#4B5059">9</div>
<div class="t" style="left:515px;width:61px;text-align:right;top:356.90px;font-family:'Liberation Mono',monospace;font-size:18px;line-height:18px;letter-spacing:-1.4px;color:#4B5059">10</div>
<div class="t" style="left:515px;width:61px;text-align:right;top:384.90px;font-family:'Liberation Mono',monospace;font-size:18px;line-height:18px;letter-spacing:-1.4px;color:#4B5059">11</div>
<div class="t" style="left:515px;width:61px;text-align:right;top:411.90px;font-family:'Liberation Mono',monospace;font-size:18px;line-height:18px;letter-spacing:-1.4px;color:#4B5059">12</div>
<div class="t" style="left:515px;width:61px;text-align:right;top:439.90px;font-family:'Liberation Mono',monospace;font-size:18px;line-height:18px;letter-spacing:-1.4px;color:#4B5059">13</div>
<div class="t" style="left:515px;width:61px;text-align:right;top:466.90px;font-family:'Liberation Mono',monospace;font-size:18px;line-height:18px;letter-spacing:-1.4px;color:#4B5059">14</div>
<div class="t" style="left:515px;width:61px;text-align:right;top:494.90px;font-family:'Liberation Mono',monospace;font-size:18px;line-height:18px;letter-spacing:-1.4px;color:#4B5059">15</div>
<div class="t" style="left:515px;width:61px;text-align:right;top:521.90px;font-family:'Liberation Mono',monospace;font-size:18px;line-height:18px;letter-spacing:-1.4px;color:#4B5059">16</div>
<div class="t" style="left:515px;width:61px;text-align:right;top:549.90px;font-family:'Liberation Mono',monospace;font-size:18px;line-height:18px;letter-spacing:-1.4px;color:#4B5059">17</div>
<div class="t" style="left:515px;width:61px;text-align:right;top:576.90px;font-family:'Liberation Mono',monospace;font-size:18px;line-height:18px;letter-spacing:-1.4px;color:#4B5059">18</div>
<div class="t" style="left:515px;width:61px;text-align:right;top:604.90px;font-family:'Liberation Mono',monospace;font-size:18px;line-height:18px;letter-spacing:-1.4px;color:#A1A3AB">19</div>
<div class="t" style="left:515px;width:61px;text-align:right;top:631.90px;font-family:'Liberation Mono',monospace;font-size:18px;line-height:18px;letter-spacing:-1.4px;color:#4B5059">20</div>
<div class="t" style="left:515px;width:61px;text-align:right;top:659.90px;font-family:'Liberation Mono',monospace;font-size:18px;line-height:18px;letter-spacing:-1.4px;color:#4B5059">21</div>
<div class="t" style="left:515px;width:61px;text-align:right;top:686.90px;font-family:'Liberation Mono',monospace;font-size:18px;line-height:18px;letter-spacing:-1.4px;color:#4B5059">22</div>
<div class="t" style="left:515px;width:61px;text-align:right;top:714.90px;font-family:'Liberation Mono',monospace;font-size:18px;line-height:18px;letter-spacing:-1.4px;color:#4B5059">23</div>
<div class="t" style="left:515px;width:61px;text-align:right;top:741.90px;font-family:'Liberation Mono',monospace;font-size:18px;line-height:18px;letter-spacing:-1.4px;color:#4B5059">24</div>
<div class="t" style="left:515px;width:61px;text-align:right;top:769.90px;font-family:'Liberation Mono',monospace;font-size:18px;line-height:18px;letter-spacing:-1.4px;color:#4B5059">25</div>
<div class="t" style="left:515px;width:61px;text-align:right;top:796.90px;font-family:'Liberation Mono',monospace;font-size:18px;line-height:18px;letter-spacing:-1.4px;color:#4B5059">26</div>
<div class="t" style="left:515px;width:61px;text-align:right;top:824.90px;font-family:'Liberation Mono',monospace;font-size:18px;line-height:18px;letter-spacing:-1.4px;color:#4B5059">27</div>
<svg style="left:584px;top:383.7px" width="16" height="17" viewBox="0 0 16 17"><path d="M1 1 L15 8.3 L1 15.6 Z" fill="#243526" stroke="#55A058" stroke-width="1.5" stroke-linejoin="round"/></svg>
<svg style="left:584px;top:410.7px" width="16" height="17" viewBox="0 0 16 17"><path d="M1 1 L15 8.3 L1 15.6 Z" fill="#243526" stroke="#55A058" stroke-width="1.5" stroke-linejoin="round"/></svg>
<svg style="left:641px;top:600.7px" width="16" height="20" viewBox="0 0 16 20"><path d="M8 1 A6.3 6.3 0 0 1 12 12.2 L11.3 14.5 H4.7 L4 12.2 A6.3 6.3 0 0 1 8 1 Z" fill="#F2C55C"/><rect x="5" y="15.5" width="6" height="1.4" fill="#CED0D6"/><rect x="5.8" y="17.8" width="4.4" height="1.4" fill="#CED0D6"/></svg>
<div class="a" style="left:1857px;top:136px;width:10px;height:586px;background:#48494C;"></div>
<div class="a" style="left:1851px;top:521px;width:17px;height:3px;background:#5E7A6A;"></div>
<div class="a" style="left:1851px;top:564px;width:17px;height:3px;background:#E5C05B;"></div>
<div class="a" style="left:1868px;top:322px;width:1px;height:474px;background:#2F4C8C;"></div>
<div class="a" style="left:632px;top:846px;width:700px;height:10px;background:#48494C;"></div>
<div class="code" style="left:631px;top:100.98px;padding-top:10px;height:34px;max-width:661px;overflow:hidden"><span class="k">import</span> org.apache.commons.collections.Transformer;</div>
<div class="code" style="left:631px;top:127.98px;padding-top:10px;height:34px;max-width:661px;overflow:hidden"><span class="k">import</span> org.apache.commons.collections.functors.ChainedTransformer;</div>
<div class="code" style="left:631px;top:155.98px;padding-top:10px;height:34px;max-width:661px;overflow:hidden"><span class="k">import</span> org.apache.commons.collections.functors.ConstantTransformer;</div>
<div class="code" style="left:631px;top:182.98px;padding-top:10px;height:34px;max-width:661px;overflow:hidden"><span class="k">import</span> org.apache.commons.collections.functors.InvokerTransformer;</div>
<div class="code" style="left:631px;top:210.98px;padding-top:10px;height:34px;max-width:661px;overflow:hidden"><span class="k">import</span> org.apache.commons.collections.keyvalue.TiedMapEntry;</div>
<div class="code" style="left:631px;top:237.98px;padding-top:10px;height:34px;max-width:661px;overflow:hidden"><span class="k">import</span> org.apache.commons.collections.map.LazyMap;</div>
<div class="code" style="left:631px;top:292.98px;padding-top:10px;height:34px;max-width:661px;overflow:hidden"><span class="k">import</span> java.util.HashMap;</div>
<div class="code" style="left:631px;top:320.98px;padding-top:10px;height:34px;max-width:661px;overflow:hidden"><span class="k">import</span> java.util.Map;</div>
<div class="code" style="left:631px;top:375.98px;padding-top:10px;height:34px;max-width:661px;overflow:hidden"><span class="k">public class</span> CC6 {</div>
<div class="code" style="left:671px;top:402.98px;padding-top:10px;height:34px;max-width:621px;overflow:hidden"><span class="k">public static void</span> <span class="f">main</span>(String[] args) <span class="k">throws</span> <span class="g">Exception</span> {</div>
<div class="code" style="left:711px;top:430.98px;padding-top:10px;height:34px;max-width:581px;overflow:hidden">Transformer[] Transformer = <span class="k">new</span> Transformer[]{</div>
<div class="code" style="left:791px;top:457.98px;padding-top:10px;height:34px;max-width:501px;overflow:hidden"><span class="k">new</span> ConstantTransformer(Runtime.<span class="k">class</span>),</div>
<div class="code" style="left:791px;top:485.98px;padding-top:10px;height:34px;max-width:501px;overflow:hidden"><span class="k">new</span> InvokerTransformer(<span class="h">methodName:</span><span class="s">"getDeclaredMethod"</span>, <span class="k">new</span> Class[]{String.<span class="k">class</span>}</div>
<div class="code" style="left:791px;top:512.98px;padding-top:10px;height:34px;max-width:501px;overflow:hidden"><span class="k">new</span> InvokerTransformer(<span class="h">methodName:</span><span class="s">"invoke"</span>,<span class="k">new</span> Class[]{Object.<span class="k">class</span>}</div>
<div class="code" style="left:791px;top:540.98px;padding-top:10px;height:34px;max-width:501px;overflow:hidden"><span class="k">new</span> InvokerTransformer(<span class="h">methodName:</span><span class="s">"exec"</span>, <span class="k">new</span> Class[]{String.<span class="k">class</span>}</div>
<div class="code" style="left:711px;top:567.98px;padding-top:10px;height:34px;max-width:581px;overflow:hidden">};</div>
<div class="code" style="left:711px;top:595.98px;padding-top:10px;height:34px;max-width:581px;overflow:hidden">ChainedTransformer chainedTransformer = <span class="k">new</span> <span style="background:#393B3C;padding:7px 0 1.8px">ChainedTransformer(Transformer);</span></div>
<div class="code" style="left:711px;top:622.98px;padding-top:10px;height:34px;max-width:581px;overflow:hidden">HashMap&lt;Object,Object&gt; map = <span class="k">new</span> HashMap&lt;&gt;();</div>
<div class="code" style="left:711px;top:650.98px;padding-top:10px;height:34px;max-width:581px;overflow:hidden">Map&lt;Object,Object&gt; lazyMap = LazyMap.<i>decorate</i>(map,chainedTransformer);</div>
<div class="code" style="left:711px;top:705.98px;padding-top:10px;height:34px;max-width:581px;overflow:hidden">TiedMapEntry tiedMapEntry = <span class="k">new</span> TiedMapEntry(lazyMap,<span class="h" style="margin-right:1px;padding-right:4px">key:</span><span class="s">"key"</span>);</div>
<div class="code" style="left:711px;top:732.98px;padding-top:10px;height:34px;max-width:581px;overflow:hidden">map.put(tiedMapEntry, <span class="s">"value"</span>);</div>
<div class="code" style="left:671px;top:760.98px;padding-top:10px;height:34px;max-width:621px;overflow:hidden">}</div>
<div class="code" style="left:631px;top:815.98px;padding-top:10px;height:34px;max-width:661px;overflow:hidden">}</div>
<div class="code" style="left:1792px;top:495.98px;width:77px;overflow:hidden"><span class="k">w</span> Object[]</div>
<div class="code" style="left:1791px;top:522.98px;width:77px;overflow:hidden"><span class="k">null, null</span></div>
<div class="a" style="left:546px;top:846px;width:80px;height:11px;overflow:hidden"><div class="t" style="left:0px;width:30px;text-align:right;top:5.90px;font-family:'Liberation Mono',monospace;font-size:18px;line-height:18px;letter-spacing:-1.4px;color:#4B5059">28</div></div>
<div class="t " style="left:1801px;top:112.10px;font-size:15px;line-height:15px;color:#DFE1E5;font-weight:normal;font-family:'Liberation Sans',sans-serif;">1</div>
<svg style="left:1823px;top:116px" width="10" height="6" viewBox="0 0 10 6"><path d="M0.8 5.2 L5 1 L9.2 5.2" fill="none" stroke="#CED0D6" stroke-width="1.3"/></svg>
<svg style="left:1849px;top:116px" width="10" height="6" viewBox="0 0 10 6"><path d="M0.8 0.8 L5 5 L9.2 0.8" fill="none" stroke="#CED0D6" stroke-width="1.3"/></svg>
<svg style="left:1885px;top:65px" width="23" height="24" viewBox="0 0 23 24"><g fill="none" stroke="#CED0D6" stroke-width="1.8" stroke-linejoin="round"><path d="M10 3 C5.5 3 4 6.5 4 10 V15 L1.5 18.5 H19.5 L17 15 V10 C17 7.5 16 5.5 14 4"/><path d="M8 21.5 Q10.5 23.5 13 21.5"/></g><circle cx="18" cy="3.5" r="4" fill="#E55765"/></svg>
<svg style="left:1885px;top:117px" width="24" height="22" viewBox="0 0 24 22"><g fill="none" stroke="#CED0D6" stroke-width="1.8" stroke-linecap="round" stroke-linejoin="round"><path d="M4.5 16.5 C0 12 0.5 4.5 6.5 2 C11.5 0 16.5 2 18.5 6.5"/><path d="M7.5 13.5 C5.5 11 6 7 9.5 6 C12 5.3 14 6.5 15 8.5"/><path d="M11 11 H21.5 Q22.5 11 22.5 12 V21.5 L19.5 19 H12 Q11 19 11 18 Z"/></g></svg>
<svg style="left:1885px;top:165px" width="21" height="23" viewBox="0 0 21 23"><g fill="none" stroke="#CED0D6" stroke-width="1.8"><ellipse cx="10.5" cy="4.5" rx="9" ry="3.5"/><path d="M1.5 4.5 V18.5 C1.5 20.5 5.5 22 10.5 22 C15.5 22 19.5 20.5 19.5 18.5 V4.5"/><path d="M1.5 9.5 C1.5 11.5 5.5 13 10.5 13 C15.5 13 19.5 11.5 19.5 9.5"/><path d="M1.5 14 C1.5 16 5.5 17.5 10.5 17.5 C15.5 17.5 19.5 16 19.5 14"/></g></svg>
<div class="t " style="left:1883px;top:211.99px;font-size:26px;line-height:26px;color:#CED0D6;font-weight:normal;font-family:'Liberation Sans',sans-serif;font-style:italic;letter-spacing:-1px">m</div>
<svg style="left:711px;top:456.2px" width="460" height="3" viewBox="0 0 460 3"><polyline points="0.0,0 2.0,2 4.0,0 6.0,2 8.0,0 10.0,2 12.0,0 14.0,2 16.0,0 18.0,2 20.0,0 22.0,2 24.0,0 26.0,2 28.0,0 30.0,2 32.0,0 34.0,2 36.0,0 38.0,2 40.0,0 42.0,2 44.0,0 46.0,2 48.0,0 50.0,2 52.0,0 54.0,2 56.0,0 58.0,2 60.0,0 62.0,2 64.0,0 66.0,2 68.0,0 70.0,2 72.0,0 74.0,2 76.0,0 78.0,2 80.0,0 82.0,2 84.0,0 86.0,2 88.0,0 90.0,2 92.0,0 94.0,2 96.0,0 98.0,2 100.0,0 102.0,2 104.0,0 106.0,2 108.0,0 110.0,2 112.0,0 114.0,2 116.0,0 118.0,2 120.0,0 122.0,2 124.0,0 126.0,2 128.0,0 130.0,2 132.0,0 134.0,2 136.0,0 138.0,2 140.0,0 142.0,2 144.0,0 146.0,2 148.0,0 150.0,2 152.0,0 154.0,2 156.0,0 158.0,2 160.0,0 162.0,2 164.0,0 166.0,2 168.0,0 170.0,2 172.0,0 174.0,2 176.0,0 178.0,2 180.0,0 182.0,2 184.0,0 186.0,2 188.0,0 190.0,2 192.0,0 194.0,2 196.0,0 198.0,2 200.0,0 202.0,2 204.0,0 206.0,2 208.0,0 210.0,2 212.0,0 214.0,2 216.0,0 218.0,2 220.0,0 222.0,2 224.0,0 226.0,2 228.0,0 230.0,2 232.0,0 234.0,2 236.0,0 238.0,2 240.0,0 242.0,2 244.0,0 246.0,2 248.0,0 250.0,2 252.0,0 254.0,2 256.0,0 258.0,2 260.0,0 262.0,2 264.0,0 266.0,2 268.0,0 270.0,2 272.0,0 274.0,2 276.0,0 278.0,2 280.0,0 282.0,2 284.0,0 286.0,2 288.0,0 290.0,2 292.0,0 294.0,2 296.0,0 298.0,2 300.0,0 302.0,2 304.0,0 306.0,2 308.0,0 310.0,2 312.0,0 314.0,2 316.0,0 318.0,2 320.0,0 322.0,2 324.0,0 326.0,2 328.0,0 330.0,2 332.0,0 334.0,2 336.0,0 338.0,2 340.0,0 342.0,2 344.0,0 346.0,2 348.0,0 350.0,2 352.0,0 354.0,2 356.0,0 358.0,2 360.0,0 362.0,2 364.0,0 366.0,2 368.0,0 370.0,2 372.0,0 374.0,2 376.0,0 378.0,2 380.0,0 382.0,2 384.0,0 386.0,2 388.0,0 390.0,2 392.0,0 394.0,2 396.0,0 398.0,2 400.0,0 402.0,2 404.0,0 406.0,2 408.0,0 410.0,2 412.0,0 414.0,2 416.0,0 418.0,2 420.0,0 422.0,2 424.0,0 426.0,2 428.0,0 430.0,2 432.0,0 434.0,2 436.0,0 438.0,2 440.0,0 442.0,2 444.0,0 446.0,2 448.0,0 450.0,2 452.0,0 454.0,2 456.0,0 458.0,2 460.0,0" fill="none" stroke="#8C7A35" stroke-width="1"/></svg>
<svg style="left:1001px;top:676.2px" width="160" height="3" viewBox="0 0 160 3"><polyline points="0.0,0 2.0,2 4.0,0 6.0,2 8.0,0 10.0,2 12.0,0 14.0,2 16.0,0 18.0,2 20.0,0 22.0,2 24.0,0 26.0,2 28.0,0 30.0,2 32.0,0 34.0,2 36.0,0 38.0,2 40.0,0 42.0,2 44.0,0 46.0,2 48.0,0 50.0,2 52.0,0 54.0,2 56.0,0 58.0,2 60.0,0 62.0,2 64.0,0 66.0,2 68.0,0 70.0,2 72.0,0 74.0,2 76.0,0 78.0,2 80.0,0 82.0,2 84.0,0 86.0,2 88.0,0 90.0,2 92.0,0 94.0,2 96.0,0 98.0,2 100.0,0 102.0,2 104.0,0 106.0,2 108.0,0 110.0,2 112.0,0 114.0,2 116.0,0 118.0,2 120.0,0 122.0,2 124.0,0 126.0,2 128.0,0 130.0,2 132.0,0 134.0,2 136.0,0 138.0,2 140.0,0 142.0,2 144.0,0 146.0,2 148.0,0 150.0,2 152.0,0 154.0,2 156.0,0 158.0,2 160.0,0" fill="none" stroke="#8C7A35" stroke-width="1"/></svg>
<div class="t " style="left:66px;top:877.30px;font-size:15px;line-height:15px;color:#DFE1E5;font-weight:bold;font-family:'Liberation Sans',sans-serif;">运行</div>
<svg style="left:132px;top:876px" width="19" height="16" viewBox="0 0 19 16"><rect x="0.8" y="0.8" width="17.4" height="14.4" rx="2.5" fill="#25324D" stroke="#548AF7" stroke-width="1.4"/><rect x="3.5" y="3.3" width="2" height="1.4" fill="#548AF7"/><rect x="6.5" y="3.3" width="2" height="1.4" fill="#548AF7"/></svg>
<div class="t " style="left:156.5px;top:877.38px;font-size:15.5px;line-height:15.5px;color:#DFE1E5;font-weight:normal;font-family:'Liberation Sans',sans-serif;">CC6</div>
<svg style="left:200px;top:880.5px" width="10" height="10" viewBox="0 0 10 10"><path d="M0.5 0.5 L9.5 9.5 M9.5 0.5 L0.5 9.5" stroke="#8C8F94" stroke-width="1.3"/></svg>
<div class="a" style="left:116px;top:906px;width:108px;height:4px;background:#55585E;border-radius:2px"></div>
<div class="a" style="left:51px;top:909px;width:1818px;height:1px;background:#1E1F22;"></div>
<svg style="left:67px;top:922px" width="21" height="21" viewBox="0 0 21 21"><g fill="none" stroke="#CED0D6" stroke-width="1.6"><path d="M14.5 4 A7.5 7.5 0 1 0 8.5 16.8"/><path d="M11 0.8 L15 4 L11.5 7.5"/></g><path d="M10.8 10.5 L19.5 15.3 L10.8 20 Z" fill="#253627" stroke="#5FB865" stroke-width="1.5" stroke-linejoin="round"/></svg>
<div class="a" style="left:101.5px;top:923.5px;width:15px;height:15px;background:#4E5157;border-radius:2.5px"></div>
<div class="a" style="left:129px;top:919px;width:1px;height:25px;background:#393B40;"></div>
<svg style="left:141px;top:923px" width="18" height="16" viewBox="0 0 18 16"><g fill="none" stroke="#6F737A" stroke-width="1.4"><path d="M1 4.5 Q1 3 2.5 3 H5 L6.5 1 H11.5 L13 3 H15.5 Q17 3 17 4.5 V13.5 Q17 15 15.5 15 H2.5 Q1 15 1 13.5 Z"/><circle cx="9" cy="9" r="3.2"/></g></svg>
<svg style="left:175px;top:922px" width="17" height="18" viewBox="0 0 17 18"><g fill="none" stroke="#6F737A" stroke-width="1.4"><path d="M5 4.5 V2 Q5 1 6 1 H15 Q16 1 16 2 V16 Q16 17 15 17 H6 Q5 17 5 16 V13.5"/><path d="M0.5 9 H11 M8 5.8 L11.2 9 L8 12.2"/></g></svg>
<svg style="left:205px;top:923px" width="22" height="20" viewBox="0 0 22 20"><g fill="none" stroke="#6F737A" stroke-width="1.4"><path d="M2 14.5 A9 9 0 1 1 18.5 14.5 Z"/><path d="M10 11 L14 7"/></g><circle cx="10" cy="11" r="1.5" fill="#6F737A"/><path d="M21.5 15 V19.5 H17 Z" fill="#6F737A"/></svg>
<svg style="left:246px;top:923px" width="4" height="16" viewBox="0 0 4 16"><circle cx="2" cy="2" r="1.6" fill="#CED0D6"/><circle cx="2" cy="8.3" r="1.6" fill="#CED0D6"/><circle cx="2" cy="14.6" r="1.6" fill="#CED0D6"/></svg>
<div class="a" style="left:51px;top:953px;width:1818px;height:29px;background:#1E1F22;"></div>
<div class="a" style="left:51px;top:953px;width:48px;height:29px;background:#2B2D30;"></div>
<svg style="left:71.5px;top:961px" width="6" height="10" viewBox="0 0 6 10"><path d="M0.8 0.8 L5 5 L0.8 9.2" fill="none" stroke="#CED0D6" stroke-width="1.4"/></svg>
<div class="a" style="left:1826px;top:953px;width:43px;height:29px;background:#2B2D30;"></div>
<svg style="left:1843px;top:968px" width="6" height="11" viewBox="0 0 6 11"><path d="M5.2 0.8 L1 5.5 L5.2 10.2" fill="none" stroke="#CED0D6" stroke-width="1.4"/></svg>
<svg style="left:18px;top:995px" width="11" height="11" viewBox="0 0 11 11"><rect x="0.8" y="0.8" width="9.4" height="9.4" rx="2" fill="#25324D" stroke="#548AF7" stroke-width="1.4"/></svg>
<div class="t " style="left:33.5px;top:992.88px;font-size:15.5px;line-height:15.5px;color:#A8ABB0;font-weight:normal;font-family:'Liberation Sans',sans-serif;">CC1</div>
<svg style="left:75px;top:995px" width="6" height="10" viewBox="0 0 6 10"><path d="M0.8 0.8 L5 5 L0.8 9.2" fill="none" stroke="#A8ABB0" stroke-width="1.3"/></svg>
<div class="t " style="left:93.5px;top:992.88px;font-size:15.5px;line-height:15.5px;color:#A8ABB0;font-weight:normal;font-family:'Liberation Sans',sans-serif;">src</div>
<svg style="left:126px;top:995px" width="6" height="10" viewBox="0 0 6 10"><path d="M0.8 0.8 L5 5 L0.8 9.2" fill="none" stroke="#A8ABB0" stroke-width="1.3"/></svg>
<div class="t " style="left:144.5px;top:992.88px;font-size:15.5px;line-height:15.5px;color:#A8ABB0;font-weight:normal;font-family:'Liberation Sans',sans-serif;">main</div>
<svg style="left:191.5px;top:995px" width="6" height="10" viewBox="0 0 6 10"><path d="M0.8 0.8 L5 5 L0.8 9.2" fill="none" stroke="#A8ABB0" stroke-width="1.3"/></svg>
<div class="t " style="left:209px;top:992.88px;font-size:15.5px;line-height:15.5px;color:#A8ABB0;font-weight:normal;font-family:'Liberation Sans',sans-serif;">java</div>
<svg style="left:250.5px;top:995px" width="6" height="10" viewBox="0 0 6 10"><path d="M0.8 0.8 L5 5 L0.8 9.2" fill="none" stroke="#A8ABB0" stroke-width="1.3"/></svg>
<svg style="left:269px;top:991px" width="18" height="18" viewBox="0 0 18 18"><defs><mask id="m2691000"><rect x="-2" y="-2" width="24" height="24" fill="#fff"/><path d="M9 -1.5 L20 4.5 L9 10.5 Z" fill="#000"/></mask></defs>
<g mask="url(#m2691000)"><circle cx="9" cy="9" r="8.2" fill="#25324D" stroke="#548AF7" stroke-width="1.4"/><path d="M11.6 6.4 A3.7 3.7 0 1 0 11.6 11.6" fill="none" stroke="#548AF7" stroke-width="1.4"/></g>
<path d="M10.5 0.8 L18.5 5 L10.5 9.2 Z" fill="#223424" stroke="#5A9E5C" stroke-width="1.1" stroke-linejoin="round"/></svg>
<div class="t " style="left:293px;top:992.88px;font-size:15.5px;line-height:15.5px;color:#A8ABB0;font-weight:normal;font-family:'Liberation Sans',sans-serif;">CC6</div>
<svg style="left:335px;top:995px" width="6" height="10" viewBox="0 0 6 10"><path d="M0.8 0.8 L5 5 L0.8 9.2" fill="none" stroke="#A8ABB0" stroke-width="1.3"/></svg>
<svg style="left:353px;top:990px" width="20" height="20" viewBox="0 0 20 20"><circle cx="10.5" cy="9.5" r="8.3" fill="#4A2A2A" stroke="#DB5C5C" stroke-width="1.4"/><text x="10.5" y="13.5" text-anchor="middle" font-family="Liberation Sans" font-size="12" fill="#DB5C5C">m</text><path d="M5 12.5 L8.5 16 L5 19.5 L1.5 16 Z" fill="#2B2D30" stroke="#CED0D6" stroke-width="1.2"/></svg>
<div class="t " style="left:378.5px;top:992.88px;font-size:15.5px;line-height:15.5px;color:#A8ABB0;font-weight:normal;font-family:'Liberation Sans',sans-serif;">main</div>
<div class="t " style="left:1616px;top:992.88px;font-size:15.5px;line-height:15.5px;color:#A8ABB0;font-weight:normal;font-family:'Liberation Sans',sans-serif;">19:55</div>
<div class="t " style="left:1676px;top:992.88px;font-size:15.5px;line-height:15.5px;color:#A8ABB0;font-weight:normal;font-family:'Liberation Sans',sans-serif;">CRLF</div>
<div class="t " style="left:1732px;top:992.88px;font-size:15.5px;line-height:15.5px;color:#A8ABB0;font-weight:normal;font-family:'Liberation Sans',sans-serif;">UTF-8</div>
<div class="t " style="left:1800px;top:992.88px;font-size:15.5px;line-height:15.5px;color:#A8ABB0;font-weight:normal;font-family:'Liberation Sans',sans-serif;">4 个空格</div>
<svg style="left:1881px;top:993px" width="19" height="17" viewBox="0 0 19 17"><g fill="none" stroke="#A8ABB0" stroke-width="1.5"><rect x="1" y="7" width="11" height="9" rx="1.5"/><path d="M9 7 V4.5 A3.5 3.5 0 0 1 16 4.5 V6.5"/></g><circle cx="6.5" cy="11.5" r="1.3" fill="#A8ABB0"/></svg>
<div class="a" style="left:1291px;top:108px;width:507px;height:836px;border-radius:9px;background:#262626"></div>
<div class="a" style="left:1292px;top:109px;width:505px;height:834px;border-radius:8px;overflow:hidden;background:linear-gradient(180deg,#F8EFF2 0%,#F7EFF4 35%,#F4EEF4 100%)"></div>
<svg style="left:1317px;top:120px" width="14" height="18" viewBox="0 0 14 18"><rect x="0" y="0" width="14" height="18" rx="1.2" fill="#8C9AA8"/><rect x="0.8" y="0.8" width="12.4" height="4.5" fill="#3DD2F2"/><rect x="1.2" y="6.3" width="3.2" height="3" fill="#D5DDE5"/><rect x="5.4" y="6.3" width="3.2" height="3" fill="#D5DDE5"/><rect x="9.6" y="6.3" width="3.2" height="3" fill="#D5DDE5"/><rect x="1.2" y="10.3" width="3.2" height="3" fill="#D5DDE5"/><rect x="5.4" y="10.3" width="3.2" height="3" fill="#D5DDE5"/><rect x="1.2" y="14.3" width="3.2" height="3" fill="#D5DDE5"/><rect x="5.4" y="14.3" width="3.2" height="3" fill="#D5DDE5"/><rect x="9.6" y="10.3" width="3.4" height="7" fill="#1D4E91"/></svg>
<div class="t " style="left:1352px;top:123.93px;font-size:14.5px;line-height:14.5px;color:#1A1A1A;font-weight:normal;font-family:'Liberation Sans',sans-serif;">计算器</div>
<div class="a" style="left:1648px;top:128px;width:12px;height:1.2px;background:#1A1A1A;"></div>
<svg style="left:1705px;top:122px" width="12" height="12" viewBox="0 0 12 12"><rect x="0.6" y="0.6" width="10.8" height="10.8" rx="1" fill="none" stroke="#1A1A1A" stroke-width="1.2"/></svg>
<svg style="left:1762px;top:122px" width="13" height="13" viewBox="0 0 13 13"><path d="M0.5 0.5 L12.5 12.5 M12.5 0.5 L0.5 12.5" stroke="#1A1A1A" stroke-width="1.2"/></svg>
<svg style="left:1313px;top:173px" width="18" height="14" viewBox="0 0 18 14"><g stroke="#1A1A1A" stroke-width="1.3"><path d="M0 1 H18 M0 6.6 H18 M0 12.2 H18"/></g></svg>
<div class="t " style="left:1352px;top:168.64px;font-size:25px;line-height:25px;color:#1A1A1A;font-weight:normal;font-family:'Liberation Sans',sans-serif;-webkit-text-stroke:0.6px #1A1A1A">标准</div>
<svg style="left:1426px;top:169px" width="20" height="20" viewBox="0 0 20 20"><g fill="none" stroke="#1A1A1A" stroke-width="1.3" stroke-linecap="round"><path d="M1.8 8.2 V4.5 Q1.8 1.8 4.5 1.8 H15.5 Q18.1 1.8 18.1 4.5 V15.5 Q18.1 18.2 15.5 18.2 H11.4"/><path d="M10.6 1.8 V7.5 Q10.6 9.4 12.5 9.4 H18.1"/><path d="M1.5 18.2 L7.8 11.9 M1.5 11.9 H7.8 V18.2"/></g></svg>
<svg style="left:1756px;top:168px" width="21" height="21" viewBox="0 0 21 21"><g fill="none" stroke="#1A1A1A" stroke-width="1.3"><path d="M3.2 5.5 A8.8 8.8 0 1 1 1.8 10.5"/><path d="M1.5 2 L3.2 5.6 L7 4.8"/><path d="M10.5 5.5 V10.8 H14.5"/></g></svg>
<div class="t " style="left:1749px;top:259.60px;font-size:58px;line-height:58px;color:#1A1A1A;font-weight:bold;font-family:'Liberation Sans',sans-serif;transform:scaleX(1.1);transform-origin:0 0">0</div>
<div class="t" style="left:1297px;width:80px;text-align:center;top:387.60px;font-size:15px;line-height:15px;color:#A3A0A2">MC</div>
<div class="t" style="left:1379.5px;width:80px;text-align:center;top:387.60px;font-size:15px;line-height:15px;color:#A3A0A2">MR</div>
<div class="t" style="left:1462.6px;width:80px;text-align:center;top:387.60px;font-size:15px;line-height:15px;color:#1A1A1A">M+</div>
<div class="t" style="left:1545px;width:80px;text-align:center;top:387.60px;font-size:15px;line-height:15px;color:#1A1A1A">M−</div>
<div class="t" style="left:1628px;width:80px;text-align:center;top:387.60px;font-size:15px;line-height:15px;color:#1A1A1A">MS</div>
<div class="t " style="left:1741px;top:387.60px;font-size:15px;line-height:15px;color:#A3A0A2;font-weight:normal;font-family:'Liberation Sans',sans-serif;">M</div>
<svg style="left:1756px;top:392px" width="9" height="5" viewBox="0 0 9 5"><path d="M0.5 0.5 L4.5 4.5 L8.5 0.5" fill="none" stroke="#A3A0A2" stroke-width="1.1"/></svg>
<div class="a" style="left:1297.5px;top:423.5px;width:120px;height:83.5px;background:#F8F5F9;border-radius:5px;border:1px solid #E8E3E9;border-bottom-color:#DAD4DC"></div>
<div class="t" style="left:1327.5px;width:60px;text-align:center;top:459.94px;font-size:17.5px;line-height:17.5px;color:#1A1A1A">%</div>
<div class="a" style="left:1421.5px;top:423.5px;width:120px;height:83.5px;background:#F8F5F9;border-radius:5px;border:1px solid #E8E3E9;border-bottom-color:#DAD4DC"></div>
<div class="t" style="left:1451.5px;width:60px;text-align:center;top:459.94px;font-size:17.5px;line-height:17.5px;color:#1A1A1A">CE</div>
<div class="a" style="left:1545.5px;top:423.5px;width:121.5px;height:83.5px;background:#F8F5F9;border-radius:5px;border:1px solid #E8E3E9;border-bottom-color:#DAD4DC"></div>
<div class="t" style="left:1576.25px;width:60px;text-align:center;top:459.94px;font-size:17.5px;line-height:17.5px;color:#1A1A1A">C</div>
<div class="a" style="left:1670.5px;top:423.5px;width:122.5px;height:83.5px;background:#F8F5F9;border-radius:5px;border:1px solid #E8E3E9;border-bottom-color:#DAD4DC"></div>
<svg style="left:1722.75px;top:459.25px" width="18" height="13" viewBox="0 0 18 13"><g fill="none" stroke="#1A1A1A" stroke-width="1.3" stroke-linejoin="round"><path d="M5 0.7 H16 Q17.3 0.7 17.3 2 V11 Q17.3 12.3 16 12.3 H5 L0.7 6.5 Z"/><path d="M8 3.8 L13.2 9.2 M13.2 3.8 L8 9.2"/></g></svg>
<div class="a" style="left:1297.5px;top:509.5px;width:120px;height:83.5px;background:#F8F5F9;border-radius:5px;border:1px solid #E8E3E9;border-bottom-color:#DAD4DC"></div>
<div class="t" style="left:1347.5px;top:541.45px;font-family:'Liberation Serif',serif;font-size:20px;line-height:20px;color:#1A1A1A;font-style:italic"><sup style="font-size:11px;font-style:normal;position:relative;top:-2px">1</sup>/x</div>
<div class="a" style="left:1421.5px;top:509.5px;width:120px;height:83.5px;background:#F8F5F9;border-radius:5px;border:1px solid #E8E3E9;border-bottom-color:#DAD4DC"></div>
<div class="t" style="left:1471.5px;top:541.45px;font-family:'Liberation Serif',serif;font-size:21px;line-height:20px;color:#1A1A1A;font-style:italic">x<span style="font-size:12px;font-style:normal;position:relative;top:-9px;left:3px">2</span></div>
<div class="a" style="left:1545.5px;top:509.5px;width:121.5px;height:83.5px;background:#F8F5F9;border-radius:5px;border:1px solid #E8E3E9;border-bottom-color:#DAD4DC"></div>
<div class="t" style="left:1593.25px;top:541.45px;font-family:'Liberation Serif',serif;font-size:20px;line-height:20px;color:#1A1A1A"><span style="font-size:10px;position:relative;top:-9px">2</span>√<i>x</i></div>
<div class="a" style="left:1670.5px;top:509.5px;width:122.5px;height:83.5px;background:#F8F5F9;border-radius:5px;border:1px solid #E8E3E9;border-bottom-color:#DAD4DC"></div>
<svg style="left:1722.75px;top:544.25px" width="18" height="14" viewBox="0 0 18 14"><path d="M0 7 H18" stroke="#1A1A1A" stroke-width="1.2"/><circle cx="9" cy="2" r="1.2" fill="#1A1A1A"/><circle cx="9" cy="12" r="1.2" fill="#1A1A1A"/></svg>
<div class="a" style="left:1297.5px;top:595.5px;width:120px;height:83.5px;background:#FFFFFF;border-radius:5px;border:1px solid #E8E3E9;border-bottom-color:#DAD4DC"></div>
<div class="t" style="left:1327.5px;width:60px;text-align:center;top:627.78px;font-size:23px;line-height:23px;color:#1A1A1A">7</div>
<div class="a" style="left:1421.5px;top:595.5px;width:120px;height:83.5px;background:#FFFFFF;border-radius:5px;border:1px solid #E8E3E9;border-bottom-color:#DAD4DC"></div>
<div class="t" style="left:1451.5px;width:60px;text-align:center;top:627.78px;font-size:23px;line-height:23px;color:#1A1A1A">8</div>
<div class="a" style="left:1545.5px;top:595.5px;width:121.5px;height:83.5px;background:#FFFFFF;border-radius:5px;border:1px solid #E8E3E9;border-bottom-color:#DAD4DC"></div>
<div class="t" style="left:1576.25px;width:60px;text-align:center;top:627.78px;font-size:23px;line-height:23px;color:#1A1A1A">9</div>
<div class="a" style="left:1670.5px;top:595.5px;width:122.5px;height:83.5px;background:#F8F5F9;border-radius:5px;border:1px solid #E8E3E9;border-bottom-color:#DAD4DC"></div>
<svg style="left:1725.25px;top:629.75px" width="13" height="13" viewBox="0 0 13 13"><path d="M0.5 0.5 L12.5 12.5 M12.5 0.5 L0.5 12.5" stroke="#1A1A1A" stroke-width="1.2"/></svg>
<div class="a" style="left:1297.5px;top:681.5px;width:120px;height:83.5px;background:#FFFFFF;border-radius:5px;border:1px solid #E8E3E9;border-bottom-color:#DAD4DC"></div>
<div class="t" style="left:1327.5px;width:60px;text-align:center;top:713.78px;font-size:23px;line-height:23px;color:#1A1A1A">4</div>
<div class="a" style="left:1421.5px;top:681.5px;width:120px;height:83.5px;background:#FFFFFF;border-radius:5px;border:1px solid #E8E3E9;border-bottom-color:#DAD4DC"></div>
<div class="t" style="left:1451.5px;width:60px;text-align:center;top:713.78px;font-size:23px;line-height:23px;color:#1A1A1A">5</div>
<div class="a" style="left:1545.5px;top:681.5px;width:121.5px;height:83.5px;background:#FFFFFF;border-radius:5px;border:1px solid #E8E3E9;border-bottom-color:#DAD4DC"></div>
<div class="t" style="left:1576.25px;width:60px;text-align:center;top:713.78px;font-size:23px;line-height:23px;color:#1A1A1A">6</div>
<div class="a" style="left:1670.5px;top:681.5px;width:122.5px;height:83.5px;background:#F8F5F9;border-radius:5px;border:1px solid #E8E3E9;border-bottom-color:#DAD4DC"></div>
<div class="a" style="left:1723.75px;top:722.25px;width:16px;height:1.2px;background:#1A1A1A;"></div>
<div class="a" style="left:1297.5px;top:767.5px;width:120px;height:83.5px;background:#FFFFFF;border-radius:5px;border:1px solid #E8E3E9;border-bottom-color:#DAD4DC"></div>
<div class="t" style="left:1327.5px;width:60px;text-align:center;top:799.78px;font-size:23px;line-height:23px;color:#1A1A1A">1</div>
<div class="a" style="left:1421.5px;top:767.5px;width:120px;height:83.5px;background:#FFFFFF;border-radius:5px;border:1px solid #E8E3E9;border-bottom-color:#DAD4DC"></div>
<div class="t" style="left:1451.5px;width:60px;text-align:center;top:799.78px;font-size:23px;line-height:23px;color:#1A1A1A">2</div>
<div class="a" style="left:1545.5px;top:767.5px;width:121.5px;height:83.5px;background:#FFFFFF;border-radius:5px;border:1px solid #E8E3E9;border-bottom-color:#DAD4DC"></div>
<div class="t" style="left:1576.25px;width:60px;text-align:center;top:799.78px;font-size:23px;line-height:23px;color:#1A1A1A">3</div>
<div class="a" style="left:1670.5px;top:767.5px;width:122.5px;height:83.5px;background:#F8F5F9;border-radius:5px;border:1px solid #E8E3E9;border-bottom-color:#DAD4DC"></div>
<svg style="left:1723.75px;top:801.25px" width="16" height="16" viewBox="0 0 16 16"><path d="M8 0 V16 M0 8 H16" stroke="#1A1A1A" stroke-width="1.2"/></svg>
<div class="a" style="left:1297.5px;top:853.5px;width:120px;height:83.5px;background:#FFFFFF;border-radius:5px;border:1px solid #E8E3E9;border-bottom-color:#DAD4DC"></div>
<svg style="left:1347.5px;top:886.25px" width="20" height="17" viewBox="0 0 20 17"><g stroke="#1A1A1A" stroke-width="1.2"><path d="M3.5 0.5 V6.5 M0.5 3.5 H6.5"/><path d="M12 1 L5.5 16"/><path d="M11 13 H18"/></g></svg>
<div class="a" style="left:1421.5px;top:853.5px;width:120px;height:83.5px;background:#FFFFFF;border-radius:5px;border:1px solid #E8E3E9;border-bottom-color:#DAD4DC"></div>
<div class="t" style="left:1451.5px;width:60px;text-align:center;top:885.78px;font-size:23px;line-height:23px;color:#1A1A1A">0</div>
<div class="a" style="left:1545.5px;top:853.5px;width:121.5px;height:83.5px;background:#FFFFFF;border-radius:5px;border:1px solid #E8E3E9;border-bottom-color:#DAD4DC"></div>
<div class="a" style="left:1604.95px;top:900.25px;width:2.6px;height:2.6px;background:#1A1A1A;border-radius:50%"></div>
<div class="a" style="left:1670.5px;top:853.5px;width:122.5px;height:83.5px;background:#0067C0;border-radius:5px;box-shadow:inset 0 -1px 0 #0F5AA6"></div>
<svg style="left:1723.25px;top:891.25px" width="17" height="8" viewBox="0 0 17 8"><path d="M0 1 H17 M0 7 H17" stroke="#FFFFFF" stroke-width="1.5"/></svg>
</body></html>
